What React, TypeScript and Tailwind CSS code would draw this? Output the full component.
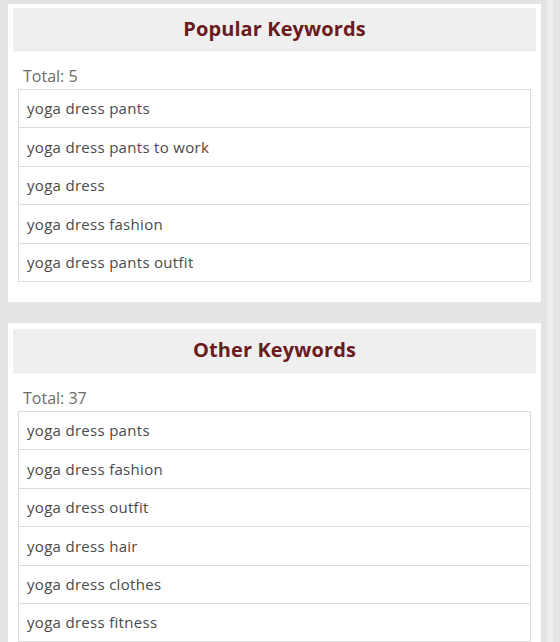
import React from "react";

const popular = [
  "yoga dress pants",
  "yoga dress pants to work",
  "yoga dress",
  "yoga dress fashion",
  "yoga dress pants outfit",
];
const other = [
  "yoga dress pants",
  "yoga dress fashion",
  "yoga dress outfit",
  "yoga dress hair",
  "yoga dress clothes",
  "yoga dress fitness",
];

function Card({ title, total, items, top, head }: { title: string; total: number; items: string[]; top: string; head: string }) {
  return (
    <div className={`bg-white px-[5px] pb-[20px] ${top}`}>
      <div className={`${head} bg-[#efefef] flex items-center justify-center border-b border-[#e6e6e6]`}>
        <h2
          className="text-[20px] font-bold text-[#6a1b1d] tracking-[0.1px]"
          style={{ fontFamily: '"Open Sans", sans-serif' }}
        >
          {title}
        </h2>
      </div>
      <div className="px-[5px]">
        <div className="h-[38px] flex items-end pl-[5px] pb-[2px] text-[16px] text-[#6b6b6b] leading-[22px]">
          Total: {total}
        </div>
        <div className="border border-[#dcdcdc] border-b-0">
          {items.map((k, i) => (
            <div
              key={i}
              className="h-[38.4px] border-b border-[#dcdcdc] flex items-center pl-[8px] text-[15px] text-[#4a4a4a] tracking-[0.3px]"
            >
              {k}
            </div>
          ))}
        </div>
      </div>
    </div>
  );
}

export default function App() {
  return (
    <div
      className="w-[560px] h-[642px] overflow-hidden bg-[#e4e4e4] flex"
      style={{ fontFamily: '"Open Sans", sans-serif' }}
    >
      <div className="w-[533px] ml-[8px] pt-[4px] flex flex-col gap-[21px] shrink-0">
        <Card title="Popular Keywords" total={5} items={popular} top="pt-[4px]" head="h-[43px]" />
        <Card title="Other Keywords" total={37} items={other} top="pt-[6px]" head="h-[44px]" />
      </div>
      <div className="w-[6px] ml-[6px] bg-[#efefef] shrink-0" />
    </div>
  );
}
